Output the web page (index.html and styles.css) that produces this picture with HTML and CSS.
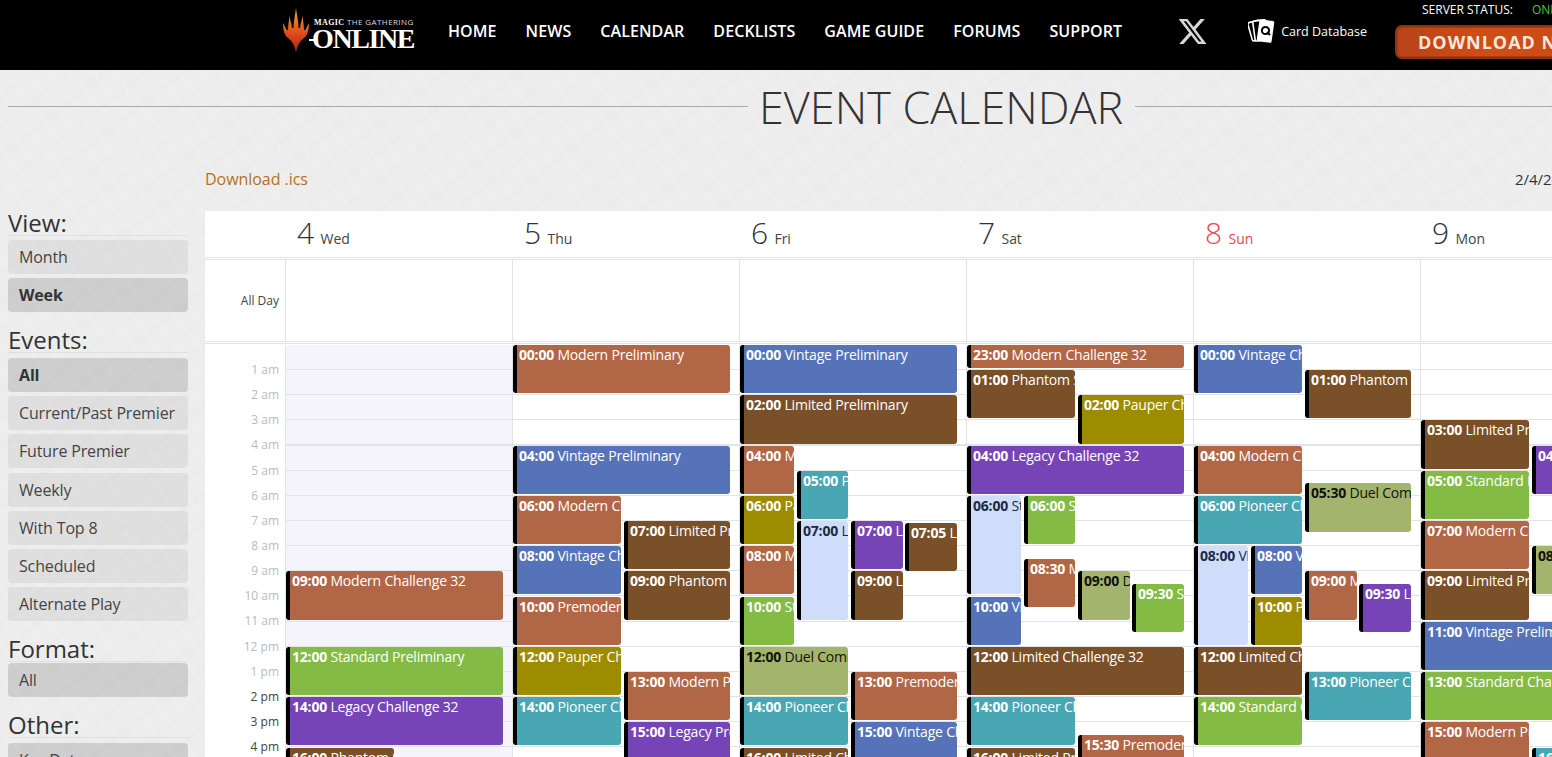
FILE: index.html
```html
<!DOCTYPE html>
<html lang="en">

<head>
    <meta charset="UTF-8">
    <meta name="viewport" content="width=device-width, initial-scale=1.0">
    <title>Event Calendar - Magic: The Gathering Online</title>
    <link rel="stylesheet" href="styles.css">
</head>

<body>
    <div class="header">
        <a class="logo" href="#">
            <svg class="logo-mark" viewBox="0 0 26 45" width="26" height="45">
                <defs>
                    <linearGradient id="flame" x1="0" y1="0" x2="0" y2="1">
                        <stop offset="0" stop-color="#f4b134"/>
                        <stop offset="0.4" stop-color="#e8641f"/>
                        <stop offset="0.7" stop-color="#d23c18"/>
                        <stop offset="1" stop-color="#a82c12"/>
                    </linearGradient>
                </defs>
                <path fill="url(#flame)" d="M13 0C12 8 10.5 14 10.5 20L9 20C8.5 15 7 12 6.5 8C6 13 5 17 5 22L3.5 22C3 20 1.5 18 0 15C0 21 1 27 5 30C9 33 12 37 13 45C14 37 17 33 21 30C25 27 26 21 26 15C24.5 18 23 20 22.5 22L21 22C21 17 20 13 19.5 8C19 12 17.5 15 17 20L15.5 20C15.5 14 14 8 13 0Z"/>
            </svg>
            <span class="logo-text">
                <span class="logo-top"><b>MAGIC</b> THE GATHERING</span>
                <span class="logo-main">ONLINE</span>
            </span>
        </a>
        <div class="nav">
            <a href="#">HOME</a>
            <a href="#">NEWS</a>
            <a href="#">CALENDAR</a>
            <a href="#">DECKLISTS</a>
            <a href="#">GAME GUIDE</a>
            <a href="#">FORUMS</a>
            <a href="#">SUPPORT</a>
        </div>
        <a class="x-link" href="#">
            <svg viewBox="0 0 24 24" width="31" height="31">
                <path fill="#d8d8d8" d="M18.244 2.25h3.308l-7.227 8.26 8.502 11.24H16.17l-5.214-6.817L4.99 21.75H1.68l7.73-8.835L1.254 2.25H8.08l4.713 6.231zm-1.161 17.52h1.833L7.084 4.126H5.117z"/>
            </svg>
        </a>
        <a class="card-db" href="#">
            <svg viewBox="0 0 28 28" width="28" height="28">
                <rect x="2" y="4" width="12" height="19" rx="1.5" transform="rotate(-16 8 14)" fill="#000" stroke="#fff" stroke-width="1.6"/>
                <rect x="6" y="3.5" width="13" height="20" rx="1.5" transform="rotate(-8 12 14)" fill="#000" stroke="#fff" stroke-width="1.6"/>
                <rect x="10" y="3" width="15" height="22" rx="1.5" transform="rotate(8 17 14)" fill="#fff"/>
                <circle cx="17.5" cy="13.5" r="3.6" fill="none" stroke="#000" stroke-width="2"/>
                <path d="M19 15l3 3" stroke="#000" stroke-width="2"/>
            </svg>
            <span>Card Database</span>
        </a>
        <div class="status-box">
            <div class="status">SERVER STATUS: <span class="online">ONLINE</span></div>
            <a class="download-btn" href="#">DOWNLOAD NOW</a>
        </div>
    </div>

    <div class="title-row">
        <div class="title-line first"></div>
        <h1>EVENT CALENDAR</h1>
        <div class="title-line"></div>
    </div>

    <div class="toolbar">
        <a href="#">Download .ics</a>
        <span class="range">2/4/2026 - 2/9/2026</span>
    </div>

    <div class="layout">
        <div class="sidebar">
            <h3>View:</h3>
            <a class="filter" href="#">Month</a>
            <a class="filter active" href="#">Week</a>

            <h3>Events:</h3>
            <a class="filter active" href="#">All</a>
            <a class="filter" href="#">Current/Past Premier</a>
            <a class="filter" href="#">Future Premier</a>
            <a class="filter" href="#">Weekly</a>
            <a class="filter" href="#">With Top 8</a>
            <a class="filter" href="#">Scheduled</a>
            <a class="filter" href="#">Alternate Play</a>

            <h3 class="tight">Format:</h3>
            <a class="filter selected" href="#">All</a>

            <h3>Other:</h3>
            <a class="filter selected" href="#">Key Dates</a>
        </div>

        <div class="calendar">
            <div class="cal-head">
                <div></div>
                <div class="day-name"><span class="num">4</span> Wed</div>
                <div class="day-name"><span class="num">5</span> Thu</div>
                <div class="day-name"><span class="num">6</span> Fri</div>
                <div class="day-name"><span class="num">7</span> Sat</div>
                <div class="day-name sunday"><span class="num">8</span> Sun</div>
                <div class="day-name"><span class="num">9</span> Mon</div>
                <div class="day-name"><span class="num">10</span> Tue</div>
            </div>

            <div class="all-day">
                <div class="all-day-label">All Day</div>
                <div></div><div></div><div></div><div></div><div></div><div></div><div></div>
            </div>

            <div class="week">
                <div class="hours">
                    <div class="past">1 am</div>
                    <div class="past">2 am</div>
                    <div class="past">3 am</div>
                    <div class="past">4 am</div>
                    <div class="past">5 am</div>
                    <div class="past">6 am</div>
                    <div class="past">7 am</div>
                    <div class="past">8 am</div>
                    <div class="past">9 am</div>
                    <div class="past">10 am</div>
                    <div class="past">11 am</div>
                    <div class="past">12 pm</div>
                    <div class="past">1 pm</div>
                    <div>2 pm</div>
                    <div>3 pm</div>
                    <div>4 pm</div>
                </div>

                <!-- wed -->
                <div class="day today">
                    <div class="event modern full" style="--h:9;--d:2"><b>09:00</b> Modern Challenge 32</div>
                    <div class="event standard full" style="--h:12;--d:2"><b>12:00</b> Standard Preliminary</div>
                    <div class="event legacy full" style="--h:14;--d:2"><b>14:00</b> Legacy Challenge 32</div>
                    <div class="event limited half-l" style="--h:16.02;--d:2"><b>16:00</b> Phantom Sealed</div>
                </div>

                <!-- thu -->
                <div class="day">
                    <div class="event modern full" style="--h:0;--d:2"><b>00:00</b> Modern Preliminary</div>
                    <div class="event vintage full" style="--h:4;--d:2"><b>04:00</b> Vintage Preliminary</div>
                    <div class="event modern half-l" style="--h:6;--d:2"><b>06:00</b> Modern Challenge 32</div>
                    <div class="event vintage half-l" style="--h:8;--d:2"><b>08:00</b> Vintage Challenge 32</div>
                    <div class="event modern half-l" style="--h:10;--d:2"><b>10:00</b> Premodern Preliminary</div>
                    <div class="event pauper half-l" style="--h:12;--d:2"><b>12:00</b> Pauper Challenge 32</div>
                    <div class="event pioneer half-l" style="--h:14;--d:2"><b>14:00</b> Pioneer Challenge 32</div>
                    <div class="event limited half-r" style="--h:7;--d:2"><b>07:00</b> Limited Preliminary</div>
                    <div class="event limited half-r" style="--h:9;--d:2"><b>09:00</b> Phantom Sealed</div>
                    <div class="event modern half-r" style="--h:13;--d:2"><b>13:00</b> Modern Preliminary</div>
                    <div class="event legacy half-r" style="--h:15;--d:2"><b>15:00</b> Legacy Preliminary</div>
                </div>

                <!-- fri -->
                <div class="day">
                    <div class="event vintage full" style="--h:0;--d:2"><b>00:00</b> Vintage Preliminary</div>
                    <div class="event limited full" style="--h:2;--d:2"><b>02:00</b> Limited Preliminary</div>
                    <div class="event modern q1" style="--h:4;--d:2"><b>04:00</b> Modern</div>
                    <div class="event pioneer q2" style="--h:5;--d:2"><b>05:00</b> Pioneer</div>
                    <div class="event pauper q1" style="--h:6;--d:2"><b>06:00</b> Pauper</div>
                    <div class="event special q2" style="--h:7;--d:4"><b>07:00</b> Limited</div>
                    <div class="event legacy q3" style="--h:7;--d:2"><b>07:00</b> Legacy</div>
                    <div class="event limited q4" style="--h:7.08;--d:2"><b>07:05</b> Limited</div>
                    <div class="event modern q1" style="--h:8;--d:2"><b>08:00</b> Modern</div>
                    <div class="event limited q3" style="--h:9;--d:2"><b>09:00</b> Limited</div>
                    <div class="event standard q1" style="--h:10;--d:2"><b>10:00</b> Standard</div>
                    <div class="event duel half-l" style="--h:12;--d:2"><b>12:00</b> Duel Commander</div>
                    <div class="event modern half-r" style="--h:13;--d:2"><b>13:00</b> Premodern Preliminary</div>
                    <div class="event pioneer half-l" style="--h:14;--d:2"><b>14:00</b> Pioneer Challenge 32</div>
                    <div class="event vintage half-r" style="--h:15;--d:2"><b>15:00</b> Vintage Challenge 32</div>
                    <div class="event limited half-l" style="--h:16.02;--d:2"><b>16:00</b> Limited Challenge 32</div>
                </div>

                <!-- sat -->
                <div class="day">
                    <div class="event modern full" style="--h:0;--d:1"><b>23:00</b> Modern Challenge 32</div>
                    <div class="event limited half-l" style="--h:1;--d:2"><b>01:00</b> Phantom Sealed</div>
                    <div class="event pauper half-r" style="--h:2;--d:2"><b>02:00</b> Pauper Challenge 32</div>
                    <div class="event legacy full" style="--h:4;--d:2"><b>04:00</b> Legacy Challenge 32</div>
                    <div class="event special q1" style="--h:6;--d:4"><b>06:00</b> Standard</div>
                    <div class="event standard q2" style="--h:6;--d:2"><b>06:00</b> Standard</div>
                    <div class="event modern q2" style="--h:8.5;--d:2"><b>08:30</b> Modern</div>
                    <div class="event duel q3" style="--h:9;--d:2"><b>09:00</b> Duel</div>
                    <div class="event standard q4" style="--h:9.5;--d:2"><b>09:30</b> Standard</div>
                    <div class="event vintage q1" style="--h:10;--d:2"><b>10:00</b> Vintage</div>
                    <div class="event limited full" style="--h:12;--d:2"><b>12:00</b> Limited Challenge 32</div>
                    <div class="event pioneer half-l" style="--h:14;--d:2"><b>14:00</b> Pioneer Challenge 32</div>
                    <div class="event modern half-r" style="--h:15.5;--d:2"><b>15:30</b> Premodern Preliminary</div>
                    <div class="event limited half-l" style="--h:16.02;--d:2"><b>16:00</b> Limited Preliminary</div>
                </div>

                <!-- sun -->
                <div class="day">
                    <div class="event vintage half-l" style="--h:0;--d:2"><b>00:00</b> Vintage Challenge 32</div>
                    <div class="event limited half-r" style="--h:1;--d:2"><b>01:00</b> Phantom Sealed</div>
                    <div class="event modern half-l" style="--h:4;--d:2"><b>04:00</b> Modern Challenge 32</div>
                    <div class="event duel half-r" style="--h:5.5;--d:2"><b>05:30</b> Duel Commander</div>
                    <div class="event pioneer half-l" style="--h:6;--d:2"><b>06:00</b> Pioneer Challenge 32</div>
                    <div class="event special q1" style="--h:8;--d:4"><b>08:00</b> Vintage</div>
                    <div class="event vintage q2" style="--h:8;--d:2"><b>08:00</b> Vintage</div>
                    <div class="event modern q3" style="--h:9;--d:2"><b>09:00</b> Modern</div>
                    <div class="event legacy q4" style="--h:9.5;--d:2"><b>09:30</b> Legacy</div>
                    <div class="event pauper q2" style="--h:10;--d:2"><b>10:00</b> Pauper</div>
                    <div class="event limited half-l" style="--h:12;--d:2"><b>12:00</b> Limited Challenge 32</div>
                    <div class="event pioneer half-r" style="--h:13;--d:2"><b>13:00</b> Pioneer Challenge 32</div>
                    <div class="event standard half-l" style="--h:14;--d:2"><b>14:00</b> Standard Challenge 32</div>
                </div>

                <!-- mon -->
                <div class="day">
                    <div class="event limited half-l" style="--h:3;--d:2"><b>03:00</b> Limited Preliminary</div>
                    <div class="event legacy half-r" style="--h:4;--d:2"><b>04:00</b> Legacy Preliminary</div>
                    <div class="event standard half-l" style="--h:5;--d:2"><b>05:00</b> Standard Preliminary</div>
                    <div class="event modern half-l" style="--h:7;--d:2"><b>07:00</b> Modern Challenge 32</div>
                    <div class="event duel half-r" style="--h:8;--d:2"><b>08:00</b> Duel Commander</div>
                    <div class="event limited half-l" style="--h:9;--d:2"><b>09:00</b> Limited Preliminary</div>
                    <div class="event vintage full" style="--h:11;--d:2"><b>11:00</b> Vintage Preliminary</div>
                    <div class="event standard full" style="--h:13;--d:2"><b>13:00</b> Standard Challenge 32</div>
                    <div class="event modern half-l" style="--h:15;--d:2"><b>15:00</b> Modern Preliminary</div>
                    <div class="event pioneer half-r" style="--h:16.02;--d:2"><b>16:00</b> Pioneer Preliminary</div>
                </div>

                <!-- tue -->
                <div class="day"></div>
            </div>
        </div>
    </div>
</body>

</html>
```

FILE: styles.css
```css
body {
    font-family: "Open Sans", Arial, sans-serif;
    color: #333;
    margin: 0;
    height: 757px;
    overflow: hidden;
    background-color: #ededed;
    background-image:
        repeating-linear-gradient(52deg, rgba(255, 255, 255, .1) 0 3px, transparent 3px 17px),
        repeating-linear-gradient(-38deg, rgba(0, 0, 0, .008) 0 5px, transparent 5px 23px);
}

a {
    text-decoration: none;
}

/* top bar */
.header {
    background-color: #000;
    height: 62px;
    padding: 0 0 8px 282px;
    display: flex;
    align-items: center;
    overflow: hidden;
}

.logo {
    display: flex;
    width: 132px;
    flex-shrink: 0;
    color: #fff;
}

.logo-mark {
    margin-top: -2px;
    margin-left: 1px;
    flex-shrink: 0;
}

.logo-text {
    display: flex;
    flex-direction: column;
    margin-left: 1px;
}

.logo-top {
    font-size: 8px;
    line-height: 10px;
    letter-spacing: .4px;
    margin: 7px 0 0 4px;
    white-space: nowrap;
    color: #ddd;
}

.logo-top b {
    font-family: "Liberation Serif", serif;
    color: #fff;
}

.logo-main {
    position: relative;
    font-family: "Liberation Serif", serif;
    font-weight: bold;
    font-size: 28px;
    line-height: 22px;
    letter-spacing: -1.4px;
    padding-left: 3px;
    margin-left: -1px;
}

/* the dash through the O of the wordmark */
.logo-main::before {
    content: "";
    position: absolute;
    left: 0;
    top: 11px;
    width: 6px;
    height: 2px;
    background-color: #fff;
}

.nav {
    display: flex;
    gap: 29px;
    margin-left: 34px;
    flex-shrink: 0;
}

.nav a {
    color: #fff;
    font-size: 16px;
    font-weight: 600;
    letter-spacing: .08px;
    white-space: nowrap;
}

.x-link {
    display: flex;
    margin-left: 55px;
    flex-shrink: 0;
}

.card-db {
    display: flex;
    align-items: center;
    gap: 5px;
    margin-left: 40px;
    color: #fff;
    font-size: 12.5px;
    white-space: nowrap;
    flex-shrink: 0;
}

.status-box {
    align-self: flex-start;
    margin-left: 28px;
    padding-top: 1px;
    flex-shrink: 0;
}

.status {
    color: #fff;
    font-size: 12px;
    line-height: 18px;
    padding-left: 27px;
    white-space: nowrap;
}

.online {
    color: #55c22b;
    margin-left: 16px;
}

.download-btn {
    display: block;
    width: 190px;
    height: 30px;
    margin-top: 6px;
    padding-left: 21px;
    line-height: 30px;
    color: #f6e6dc;
    font-size: 18px;
    font-weight: bold;
    letter-spacing: 1px;
    white-space: nowrap;
    border: 2px solid #8c3411;
    border-radius: 7px;
    box-shadow: inset 0 0 0 1px #a83c14;
    background: linear-gradient(to right, #b8421a, #cf4d17 40%, #c94a16);
}

/* page title */
.title-row {
    display: flex;
    align-items: center;
    margin: 7px 0 0 8px;
    height: 62px;
}

.title-line {
    flex: 1;
    height: 1px;
    background-color: #aaa;
    margin-top: -4px;
}

.title-line.first {
    flex: 0 0 740px;
}

.title-row h1 {
    font-size: 45px;
    font-weight: 300;
    color: #333;
    margin: -4px 12px 0 11px;
    white-space: nowrap;
}

.toolbar {
    display: grid;
    grid-template-columns: 1310px max-content;
    margin: 26px 0 0 205px;
    height: 46px;
    font-size: 16px;
    line-height: 28px;
    letter-spacing: -.05px;
    white-space: nowrap;
}

.toolbar a {
    color: #b5701f;
}

.range {
    font-size: 15px;
}

.layout {
    display: flex;
    gap: 17px;
    margin-left: 8px;
}

/* left filters */
.sidebar {
    width: 180px;
    flex-shrink: 0;
}

.sidebar h3 {
    font-size: 24px;
    font-weight: 400;
    line-height: 24px;
    color: #333;
    margin: 0 0 5px;
    border-bottom: 1px solid #e0e0e0;
}

.sidebar h3:first-child {
    margin-bottom: 4px;
}

.sidebar h3.tight {
    margin-bottom: 1px;
}

.filter {
    display: block;
    height: 34px;
    line-height: 34px;
    margin-bottom: 4.17px;
    padding-left: 11px;
    font-size: 16px;
    letter-spacing: -.15px;
    color: #444;
    background-color: rgba(0, 0, 0, .06);
    border-radius: 4px;
    white-space: nowrap;
}

.tight + .filter {
    margin-bottom: 3.17px;
}

.filter.active {
    font-weight: bold;
    color: #333;
    background-color: rgba(0, 0, 0, .13);
}

.filter.selected {
    background-color: rgba(0, 0, 0, .13);
}

.filter + h3 {
    margin-top: 16px;
}

/* calendar */
.calendar {
    width: 1874px;
    flex-shrink: 0;
    background-color: #fff;
}

.cal-head,
.all-day,
.week {
    display: grid;
    grid-template-columns: 80px repeat(7, 227px);
}

.cal-head {
    height: 46px;
    border-bottom: 3px double #e3e3e3;
}

.day-name {
    padding: 1px 0 0 12px;
    font-size: 14px;
    letter-spacing: -.1px;
    line-height: 42px;
    color: #444;
}

.day-name .num {
    font-size: 30px;
    font-weight: 300;
    color: #333;
    margin-right: 3px;
}

.sunday,
.sunday .num {
    color: #e8474c;
}

.all-day {
    height: 81px;
    border-bottom: 3px double #e3e3e3;
    margin-bottom: 1px;
}

.all-day > div {
    border-left: 1px solid #e3e3e3;
}

.all-day > .all-day-label {
    border-left: none;
    text-align: right;
    padding-right: 6px;
    font-size: 12px;
    line-height: 81px;
    color: #444;
}

.week {
    --hour: 25.15px;
    height: 412px;
    overflow: hidden;
}

.hours {
    padding-top: 12px;
}

.hours div {
    height: var(--hour);
    line-height: var(--hour);
    text-align: right;
    padding-right: 6px;
    font-size: 12px;
    color: #444;
}

.hours .past {
    color: #bbb;
}

.day {
    position: relative;
    border-left: 1px solid #e3e3e3;
    background-image: repeating-linear-gradient(to bottom, transparent 0 24px, #e3e3e3 24px 25.15px);
}

.day.today {
    background-color: #f5f4fc;
}

.event {
    position: absolute;
    top: calc(var(--h) * var(--hour));
    height: calc(var(--d) * var(--hour) - 2px);
    box-sizing: border-box;
    padding-left: 2px;
    border-left: 4px solid #000;
    border-radius: 3px;
    color: #fff;
    font-size: 14px;
    letter-spacing: -.2px;
    line-height: 20px;
    white-space: nowrap;
    overflow: hidden;
}

.full { left: 0; width: 217px; }
.half-l { left: 0; width: 108px; }
.half-r { left: 111px; width: 106px; }
.q1 { left: 0; width: 54px; }
.q2 { left: 57px; width: 51px; }
.q3 { left: 111px; width: 52px; }
.q4 { left: 165px; width: 52px; }

.modern { background-color: #b16646; }
.standard { background-color: #83bb45; }
.legacy { background-color: #7744b8; }
.limited { background-color: #7a5029; }
.vintage { background-color: #5673b9; }
.pauper { background-color: #9d8b00; }
.pioneer { background-color: #49a6b3; }
.duel { background-color: #a3b46c; color: #111; }
.special { background-color: #cfdcfa; color: #1d2a44; }
```
